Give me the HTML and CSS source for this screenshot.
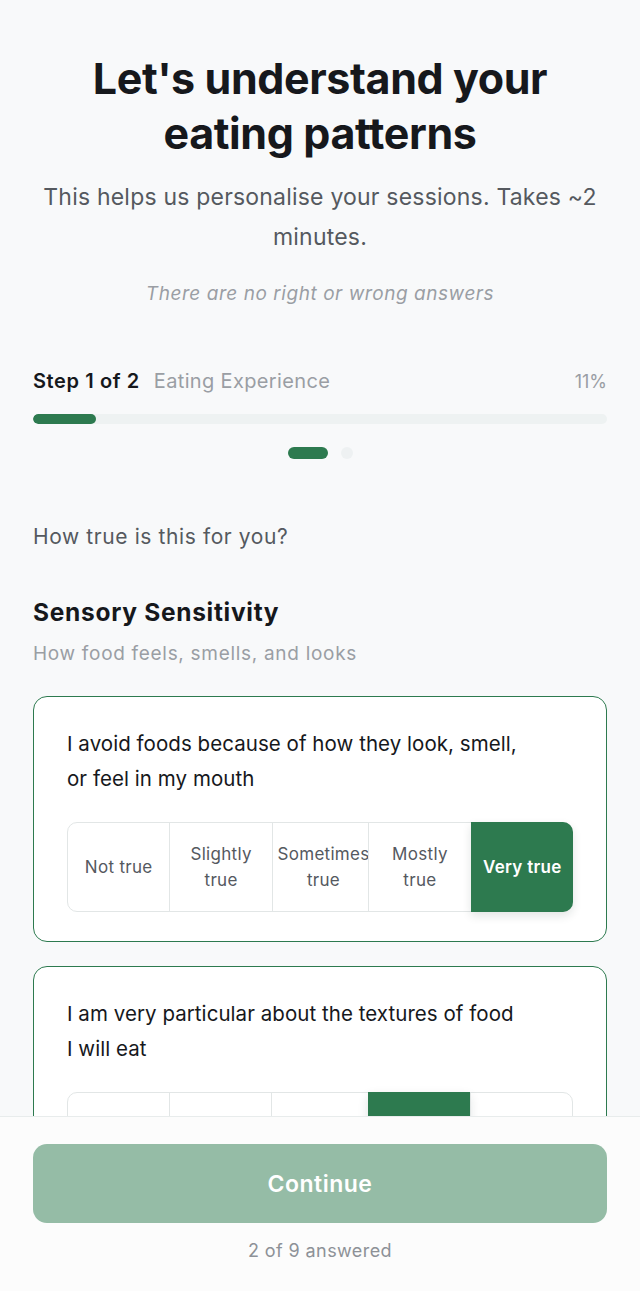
FILE: index.html
```html
<!DOCTYPE html>
<html lang="en">
<head>
<meta charset="utf-8">
<title>Eating patterns</title>
<link rel="stylesheet" href="styles.css">
</head>
<body>
<main class="page">
  <header class="intro">
    <h1 class="title">Let's understand your eating patterns</h1>
    <p class="subtitle">This helps us personalise your sessions. Takes ~2 minutes.</p>
    <p class="note">There are no right or wrong answers</p>
  </header>

  <section class="progress">
    <div class="step-row">
      <span class="step">Step 1 of 2</span>
      <span class="step-name">Eating Experience</span>
      <span class="pct">11%</span>
    </div>
    <div class="track"><div class="fill" style="width:11%"></div></div>
    <div class="dots"><span class="dot active"></span><span class="dot"></span></div>
  </section>

  <p class="prompt">How true is this for you?</p>

  <section class="group">
    <h2 class="group-title">Sensory Sensitivity</h2>
    <p class="group-sub">How food feels, smells, and looks</p>

    <div class="card">
      <p class="question">I avoid foods because of how they look, smell, or feel in my mouth</p>
      <div class="scale">
        <div class="opt">Not true</div>
        <div class="opt">Slightly true</div>
        <div class="opt">Sometimes true</div>
        <div class="opt">Mostly true</div>
        <div class="opt selected last">Very true</div>
      </div>
    </div>

    <div class="card">
      <p class="question">I am very particular about the textures of food I&nbsp;will eat</p>
      <div class="scale">
        <div class="opt">Not true</div>
        <div class="opt">Slightly true</div>
        <div class="opt">Sometimes true</div>
        <div class="opt selected">Mostly true</div>
        <div class="opt">Very true</div>
      </div>
    </div>
  </section>
</main>

<footer class="footer">
  <button class="continue" type="button">Continue</button>
  <p class="answered">2 of 9 answered</p>
</footer>
</body>
</html>
```

FILE: styles.css
```css
* { box-sizing: border-box; }
html, body { margin: 0; padding: 0; }
body {
  background: #f8f9fa;
  font-family: Inter, "Noto Sans", sans-serif;
  color: #16181c;
  height: 1291px;
  overflow: hidden;
}
.page {
  padding: 51px 33px 200px 33px;
}
.intro { text-align: center; }
.title {
  margin: 0 auto;
  font-size: 43px;
  line-height: 55px;
  font-weight: 700;
  letter-spacing: -0.4px;
  max-width: 500px;
  color: #16181c;
}
.subtitle {
  margin: 16px 0 0;
  font-size: 23px;
  line-height: 40px;
  color: #55595f;
  letter-spacing: 0.2px;
}
.note {
  margin: 22px 0 0;
  font-size: 19px;
  line-height: 30px;
  font-style: italic;
  color: #9a9ea4;
  letter-spacing: 0.55px;
}
.progress { margin-top: 57px; }
.step-row {
  display: flex;
  align-items: baseline;
  font-size: 20px;
  line-height: 30px;
}
.step { font-weight: 600; color: #16181c; letter-spacing: 0.6px; }
.step-name { margin-left: 14px; color: #9a9ea4; letter-spacing: 0.35px; }
.pct { margin-left: auto; color: #9a9ea4; font-size: 18px; }
.track {
  margin-top: 17px;
  height: 10px;
  border-radius: 5px;
  background: #eef2f2;
  overflow: hidden;
}
.fill { height: 100%; background: #2d7a4f; border-radius: 5px; }
.dots {
  display: flex;
  justify-content: center;
  gap: 13px;
  margin-top: 23px;
}
.dot { width: 12px; height: 12px; border-radius: 6px; background: #eef1f2; }
.dot.active { width: 40px; background: #2d7a4f; }
.prompt {
  margin: 63px 0 0;
  font-size: 21px;
  line-height: 30px;
  color: #55595f;
  letter-spacing: 0.6px;
}
.group { margin-top: 45px; }
.group-title {
  margin: 0;
  font-size: 24.5px;
  line-height: 30px;
  font-weight: 700;
  letter-spacing: 0.7px;
}
.group-sub {
  margin: 13px 0 0;
  font-size: 19px;
  line-height: 28px;
  color: #9a9ea4;
  letter-spacing: 0.7px;
}
.card {
  margin-top: 28px;
  background: #fff;
  border: 1.5px solid #2d7a4f;
  border-radius: 14px;
  padding: 29px 33px 29px 33px;
}
.card + .card { margin-top: 24px; }
.question {
  margin: 0;
  max-width: 462px;
  font-size: 20.5px;
  line-height: 35px;
  color: #16181c;
  letter-spacing: 0.05px;
}
.scale {
  margin-top: 26px;
  display: flex;
  height: 90px;
  border: 1px solid #e2e6e6;
  border-radius: 10px;
}
.opt {
  flex: 1 1 0;
  min-width: 0;
  display: flex;
  align-items: center;
  justify-content: center;
  text-align: center;
  font-size: 17px;
  line-height: 26px;
  color: #55595f;
  padding: 0 6px;
  overflow: hidden;
  white-space: normal;
  letter-spacing: 0.3px;
}
.opt + .opt { border-left: 1.5px solid #e2e6e6; }
.opt:nth-child(3) { padding: 0 0 0 6px; }
.opt.selected {
  background: #2d7a4f;
  color: #fff;
  font-weight: 600;
  margin: -1px 0;
  border-left-color: #2d7a4f;
  box-shadow: 0 4px 10px rgba(20, 40, 30, 0.12);
}
.opt.selected.last { margin-right: -1px; border-radius: 0 10px 10px 0; }
.footer {
  position: fixed;
  left: 0;
  right: 0;
  bottom: 0;
  height: 175px;
  background: #fcfcfc;
  border-top: 1px solid #e8ecec;
  padding: 27px 33px 0;
  text-align: center;
}
.continue {
  display: block;
  width: 100%;
  height: 79px;
  border: none;
  border-radius: 14px;
  background: #95bca6;
  color: #fff;
  font-family: Inter, "Noto Sans", sans-serif;
  font-size: 23px;
  font-weight: 600;
  letter-spacing: 0.5px;
}
.answered {
  margin: 14px 0 0;
  font-size: 18px;
  line-height: 28px;
  color: #8d9197;
  letter-spacing: 0.4px;
}
```
